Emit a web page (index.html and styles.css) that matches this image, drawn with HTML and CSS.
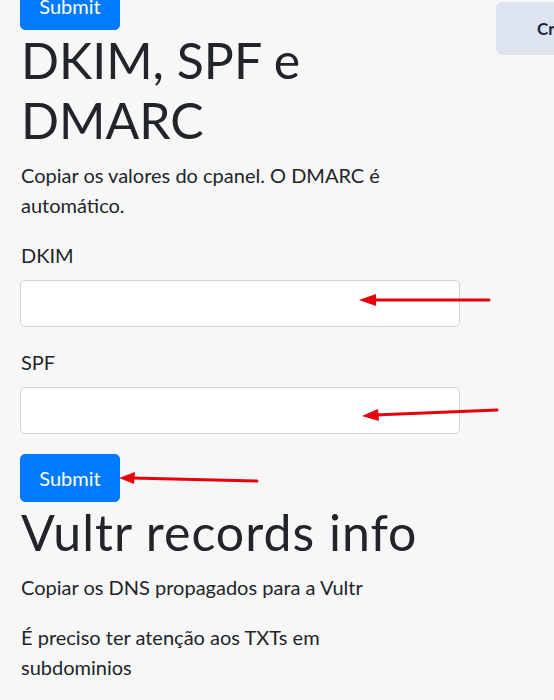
FILE: index.html
```html
<!DOCTYPE html>
<html lang="pt">
<head>
<meta charset="utf-8">
<link rel="stylesheet" href="styles.css">
</head>
<body>
<div class="page">
  <main class="main">
    <button class="btn btn-top">Submit</button>
    <section class="section">
      <h1 class="title">DKIM, SPF e DMARC</h1>
      <p class="text">Copiar os valores do cpanel. O DMARC é automático.</p>
      <form class="form">
        <div class="group">
          <label class="label">DKIM</label>
          <input class="input" type="text">
        </div>
        <div class="group">
          <label class="label">SPF</label>
          <input class="input" type="text">
        </div>
        <button class="btn" type="button">Submit</button>
      </form>
    </section>
    <section class="section narrow">
      <h1 class="title wide">Vultr records info</h1>
      <p class="text">Copiar os DNS propagados para a Vultr</p>
      <p class="text">É preciso ter atenção aos TXTs em subdominios</p>
    </section>
  </main>
  <aside class="side">
    <button class="side-btn">Criar</button>
  </aside>
</div>
<svg class="arrows" width="554" height="700" viewBox="0 0 554 700">
  <g stroke="#e8000b" stroke-width="3" stroke-linecap="round" fill="#e8000b">
    <line x1="489" y1="300" x2="372" y2="300"/>
    <polygon points="359,300 376,294 376,306" stroke="none"/>
    <line x1="497" y1="410" x2="375" y2="415"/>
    <polygon points="362,416 378,409 379,421" stroke="none"/>
    <line x1="257" y1="481" x2="132" y2="478"/>
    <polygon points="119,478 135,472 134,484" stroke="none"/>
  </g>
</svg>
</body>
</html>
```
FILE: styles.css
```css
html, body {
  margin: 0;
  padding: 0;
}
body {
  background: #f8f7f8;
  color: #212529;
  font-family: "Lato", "Noto Sans", sans-serif;
  font-size: 20px;
  line-height: 30px;
  overflow: hidden;
  position: relative;
  width: 554px;
  height: 700px;
}
.page {
  display: flex;
  align-items: flex-start;
  padding-left: 20px;
}
.main {
  flex: 0 0 440px;
  width: 440px;
  margin-top: -18px;
}
.btn {
  display: block;
  background: #007bff;
  color: #fff;
  border: 1px solid #007bff;
  border-radius: 5px;
  font: inherit;
  padding: 7.5px 15px;
  height: 48px;
  width: 100px;
  cursor: pointer;
}
.title {
  font-size: 50px;
  line-height: 60px;
  font-weight: 400;
  margin: 0 0 10px;
  padding-left: 1px;
}
.wide {
  letter-spacing: 1px;
}
.text {
  margin: 0 0 20px;
  padding-left: 1px;
}
.narrow {
  width: 400px;
}
.form {
  margin: 0;
}
.group {
  margin-bottom: 20px;
}
.label {
  display: block;
  margin-bottom: 10px;
  padding-left: 1px;
}
.input {
  display: block;
  box-sizing: border-box;
  width: 100%;
  height: 47px;
  background: #fff;
  border: 1px solid #ced4da;
  border-radius: 5px;
  font: inherit;
  padding: 7.5px 15px;
}
.side {
  flex: 0 0 auto;
  margin-left: 36px;
  padding-top: 2px;
}
.side-btn {
  background: #dde4ef;
  border: none;
  border-radius: 6px;
  height: 53px;
  padding: 0 0 0 41px;
  width: 90px;
  text-align: left;
  font-family: inherit;
  font-size: 17px;
  font-weight: 700;
  color: #1a2540;
  white-space: nowrap;
}
.arrows {
  position: absolute;
  left: 0;
  top: 0;
  pointer-events: none;
}
```
